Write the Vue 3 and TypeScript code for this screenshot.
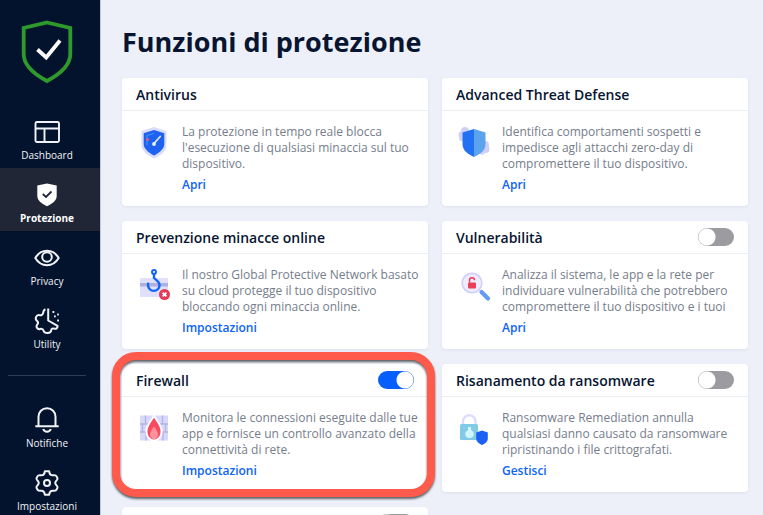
<script setup lang="ts">
import { reactive } from 'vue'

type IconName = 'antivirus' | 'atd' | 'online' | 'vulnerability' | 'firewall' | 'ransomware' | 'none'

interface Feature {
  id: string
  title: string
  text: string
  action: string
  icon: IconName
  enabled?: boolean
  highlighted?: boolean
}

interface NavItem {
  id: string
  label: string
}

const mainNav: NavItem[] = [
  { id: 'dashboard', label: 'Dashboard' },
  { id: 'protection', label: 'Protezione' },
  { id: 'privacy', label: 'Privacy' },
  { id: 'utility', label: 'Utility' },
]

const secondaryNav: NavItem[] = [
  { id: 'notifications', label: 'Notifiche' },
  { id: 'settings', label: 'Impostazioni' },
]

const active = 'protection'

const features = reactive<Feature[]>([
  {
    id: 'antivirus',
    title: 'Antivirus',
    text: "La protezione in tempo reale blocca\nl'esecuzione di qualsiasi minaccia sul tuo\ndispositivo.",
    action: 'Apri',
    icon: 'antivirus',
  },
  {
    id: 'atd',
    title: 'Advanced Threat Defense',
    text: 'Identifica comportamenti sospetti e\nimpedisce agli attacchi zero-day di\ncompromettere il tuo dispositivo.',
    action: 'Apri',
    icon: 'atd',
  },
  {
    id: 'online',
    title: 'Prevenzione minacce online',
    text: 'Il nostro Global Protective Network basato\nsu cloud protegge il tuo dispositivo\nbloccando ogni minaccia online.',
    action: 'Impostazioni',
    icon: 'online',
  },
  {
    id: 'vulnerability',
    title: 'Vulnerabilità',
    text: 'Analizza il sistema, le app e la rete per\nindividuare vulnerabilità che potrebbero\ncompromettere il tuo dispositivo e i tuoi',
    action: 'Apri',
    icon: 'vulnerability',
    enabled: false,
  },
  {
    id: 'firewall',
    title: 'Firewall',
    text: 'Monitora le connessioni eseguite dalle tue\napp e fornisce un controllo avanzato della\nconnettività di rete.',
    action: 'Impostazioni',
    icon: 'firewall',
    enabled: true,
    highlighted: true,
  },
  {
    id: 'ransomware',
    title: 'Risanamento da ransomware',
    text: 'Ransomware Remediation annulla\nqualsiasi danno causato da ransomware\nripristinando i file crittografati.',
    action: 'Gestisci',
    icon: 'ransomware',
    enabled: false,
  },
  { id: 'next', title: '', text: '', action: '', icon: 'none', enabled: false },
])
</script>

<template>
  <div class="shell">
    <aside class="sidebar">
      <svg class="logo" viewBox="0 0 52 64" aria-hidden="true">
        <path d="M26 2.500 49.300 8v26c0 11-11 20.500-23.300 27C13.700 54.500 2.700 45 2.700 34V8Z" fill="none" stroke="#2f9a2c" stroke-width="3.800" />
        <path d="m16.500 29.500 8.700 8L39 20.500" fill="none" stroke="#fff" stroke-width="3.800" />
      </svg>

      <nav class="nav">
        <template v-for="(group, index) in [mainNav, secondaryNav]" :key="index">
          <hr v-if="index === 1" class="divider" />
          <a v-for="item in group" :key="item.id" href="#" class="nav-item" :class="{ active: item.id === active }">
            <svg class="nav-icon" viewBox="0 0 26 26" aria-hidden="true">
              <g v-if="item.id === 'dashboard'" fill="none" stroke="currentColor" stroke-width="1.900">
                <rect x="1.500" y="3" width="23.500" height="20" rx="1.500" />
                <path d="M1.500 9.500H25M10.500 9.500V23" />
              </g>
              <g v-else-if="item.id === 'protection'">
                <path d="m13 1.500 9.700 2v10.500c0 4.500-4.500 7.800-9.700 10.200C7.800 21.800 3.300 18.500 3.300 14V3.500Z" fill="#fff" />
                <path d="m8.800 12 3.200 3 5.500-5.500" fill="none" stroke="#212636" stroke-width="1.800" />
              </g>
              <g v-else-if="item.id === 'privacy'" fill="none" stroke="currentColor" stroke-width="2">
                <path d="M1.300 13C4 8.500 8 5.800 13 5.800S22 8.500 24.700 13C22 17.500 18 20.200 13 20.200S4 17.500 1.300 13Z" />
                <circle cx="13" cy="12" r="4.800" />
              </g>
              <g v-else-if="item.id === 'utility'" fill="none" stroke="currentColor" stroke-width="2" stroke-linejoin="round">
                <path d="M14.200.5v12l9.300 5.300c.3 2-1.300 3.500-3.200 2.800-1.600-.6-3 .2-3.200 2-.3 3-6.500 3.200-7.400.4-.6-1.800-2-2.500-3.700-2-2.500.8-4.500-2.300-2.800-4.300 1.200-1.400 1.200-2.600-.3-3.900-2.500-2-.3-6.400 2.400-5.700 1.900.5 3.600-.4 3.900-2.500.2-2 .5-3 2.300-3.200" />
                <path d="M18.500 4h1.800M20 8.300h1.800M23.200 6.500h1.600M23.200 12.500h1.800" stroke-width="1.800" />
              </g>
              <g v-else-if="item.id === 'notifications'" fill="none" stroke="currentColor" stroke-width="2">
                <path d="M4.500 19V9.800C4.500 4.800 8 1.300 13 1.300s8.500 3.500 8.500 8.500V19M1.300 19.200h23.400M9.200 22c.6 1.800 2 2.800 3.800 2.800s3.200-1 3.800-2.800" />
              </g>
              <g v-else fill="none" stroke="currentColor" stroke-width="2" stroke-linejoin="round">
                <path d="M10.800 1.300h4.400c.3 3 1.500 4.200 3.900 4 2.600-.4 3 .2 4.200 2.400.7 1.300.4 2-.7 2.900-1.800 1.600-1.800 3.200 0 4.800 1.100.9 1.400 1.600.7 2.900-1.200 2.200-1.600 2.800-4.200 2.400-2.400-.2-3.600 1-3.900 4h-4.400c-.3-3-1.500-4.200-3.900-4-2.600.4-3-.2-4.200-2.400-.7-1.300-.4-2 .7-2.900 1.800-1.600 1.800-3.200 0-4.800C2.300 9.700 2 9 2.700 7.700 3.900 5.500 4.300 4.900 6.900 5.300c2.400.2 3.600-1 3.900-4Z" />
                <circle cx="13" cy="13" r="3" />
              </g>
            </svg>
            <span>{{ item.label }}</span>
          </a>
        </template>
      </nav>
    </aside>

    <main class="content">
      <h1>Funzioni di protezione</h1>

      <div class="grid">
        <section v-for="feature in features" :key="feature.id" class="card" :class="{ highlighted: feature.highlighted }">
          <header class="card-head">
            <h2 :id="`title-${feature.id}`">{{ feature.title }}</h2>
            <input
              v-if="feature.enabled !== undefined"
              v-model="feature.enabled"
              type="checkbox"
              role="switch"
              class="switch"
              :aria-labelledby="`title-${feature.id}`"
            />
          </header>

          <div v-if="feature.text" class="card-body">
            <svg class="feature-icon" viewBox="0 0 36 36" aria-hidden="true">
              <g v-if="feature.icon === 'antivirus'">
                <path d="m18 3 12.500 4v14c0 6-6 10.500-12.500 13.500C11.500 31.500 5.500 27 5.500 21V7Z" fill="#d9dcfb" />
                <path d="m18 6 10.300 3.300V20c0 5-5 8.700-10.300 11.500C12.700 28.700 7.700 25 7.700 20V9.300Z" fill="#1e62f2" />
                <path d="M11 21V11.500L18 9.500" fill="none" stroke="#3f91f7" stroke-width="1.300" />
                <path d="m18 19.500 6.200-7" stroke="#dfe6ff" stroke-width="1.800" stroke-linecap="round" />
                <circle cx="18" cy="20" r="1.900" fill="#eef0ff" />
                <circle cx="11.700" cy="15.500" r="1.500" fill="#ef5674" />
              </g>
              <g v-else-if="feature.icon === 'atd'">
                <g fill="#cfcff7">
                  <circle cx="9" cy="7" r="4" /><circle cx="6.500" cy="11" r="4" /><circle cx="6" cy="14.500" r="2.800" />
                  <circle cx="29" cy="21" r="4" /><circle cx="29.500" cy="25" r="4" /><circle cx="26" cy="28" r="2.800" />
                </g>
                <path d="M18 5v28C11.500 30 6.500 26.500 6.500 20V8.500Z" fill="#2270f3" />
                <path d="M18 5v28c6.500-3 11.500-6.500 11.500-13V8.500Z" fill="#5ba4ed" />
              </g>
              <g v-else-if="feature.icon === 'online'">
                <rect x="4" y="11" width="28" height="19" rx="1" fill="#e0e0fc" />
                <path d="M4 16h28v3.500H4Z" fill="#afafe0" />
                <circle cx="18" cy="5" r="2" fill="none" stroke="#0f65f7" stroke-width="1.900" />
                <path d="M18 7v4c1.800 1.800 5.500 3.200 5.500 7.200a5.700 5.700 0 0 1-11.400 0v-1.500" fill="none" stroke="#0f65f7" stroke-width="2.400" stroke-linecap="round" />
                <circle cx="28.500" cy="27.500" r="5.500" fill="#e33a58" />
                <path d="m26.600 25.600 3.800 3.800m0-3.800-3.800 3.800" stroke="#fff" stroke-width="1.800" />
              </g>
              <g v-else-if="feature.icon === 'vulnerability'">
                <path d="m25.500 25 6.500 6.500" stroke="#659bf8" stroke-width="4.200" stroke-linecap="round" />
                <circle cx="16" cy="16" r="9.800" fill="#ededff" stroke="#cfcffa" stroke-width="1.600" />
                <rect x="12" y="15.500" width="8" height="6" rx="1" fill="#ec3d5a" />
                <path d="M13.500 15.500v-2.200a2.500 2.500 0 0 1 5 0" fill="none" stroke="#ec3d5a" stroke-width="1.500" />
              </g>
              <g v-else-if="feature.icon === 'firewall'">
                <rect x="4" y="5.500" width="28" height="25" fill="#d8d8fa" />
                <path d="M4 14h28M4 22h28M9.500 5.500V14M26.500 5.500V14M6.500 14v8M29.500 14v8M10 22v8.500M27 22v8.500" stroke="#b3b3e6" stroke-width="1.300" />
                <path d="M18 6c3 5 7.600 9.500 7.600 15.500 0 5-3.400 9-7.600 9s-7.600-4-7.600-9C10.400 15.500 15 11 18 6Z" fill="#f84b5f" stroke="#fff" stroke-width="2" />
                <path d="M18 16.500c2 3 4 5.200 4 8s-1.800 4.700-4 4.700-4-1.900-4-4.700 2-5 4-8Z" fill="#ff929c" />
              </g>
              <g v-else>
                <path d="M7 16v-4.500a6.200 6.200 0 0 1 12.500 0V16" fill="none" stroke="#dcdcff" stroke-width="2.400" />
                <rect x="4" y="14" width="18" height="16" rx="1.500" fill="#82cbe8" />
                <path d="M12 17h3v3c2.200 1.200 2.800 2.500 2.800 4 0 2.500-1.800 4-4.300 4s-4.300-1.500-4.300-4c0-1.500.8-2.800 2.800-4Z" fill="#d0f7fb" />
                <path d="m26 20.500 5.800 2v6c0 3.200-2.800 5-5.800 6.500-3-1.500-5.800-3.300-5.800-6.500v-6Z" fill="#1d60f3" />
              </g>
            </svg>

            <div class="info">
              <p>{{ feature.text }}</p>
              <a href="#">{{ feature.action }}</a>
            </div>
          </div>
        </section>
      </div>
    </main>
  </div>
</template>

<style>
body {
  margin: 0;
  background: #eef0f9;
}
</style>

<style scoped>
.shell {
  display: flex;
  height: 100vh;
  overflow: hidden;
  background: #eef0f9;
  color: #071530;
  font-family: "Open Sans", "Noto Sans", sans-serif;
}

.sidebar {
  display: flex;
  flex: 0 0 100px;
  flex-direction: column;
  overflow: hidden;
  background: #03132d;
  border-right: 1px solid #c5c9d6;
}

.logo {
  flex: none;
  width: 52px;
  height: 64px;
  margin: 20px 0 21px 21px;
}

.nav {
  display: flex;
  flex-direction: column;
  width: 100%;
}

.nav-item {
  display: flex;
  flex: none;
  flex-direction: column;
  align-items: center;
  gap: 2px;
  box-sizing: border-box;
  height: 63px;
  padding: 14px 6px 0 0;
  color: #f1f3f7;
  font-size: 10px;
  line-height: 16px;
  text-decoration: none;
}

.nav-item.active {
  background: #212636;
  color: #fff;
  font-weight: 700;
}

.nav-icon {
  display: block;
  width: 26px;
  height: 26px;
}

.divider {
  width: 78px;
  height: 1px;
  margin: 18px 0 17px 8px;
  border: 0;
  background: #2f3d54;
}

.content {
  flex: 1;
  min-width: 0;
  padding: 20px 15px 0 21px;
  overflow: hidden;
}

h1 {
  margin: 0 0 15px;
  font-size: 27px;
  line-height: 43px;
  font-weight: 700;
}

.grid {
  display: grid;
  grid-template-columns: repeat(2, minmax(0, 1fr));
  grid-auto-rows: 128px;
  gap: 15px 14px;
}

.card {
  position: relative;
  background: #fff;
  border-radius: 4px;
  box-shadow: 0 1px 3px rgba(20, 30, 80, 0.08);
}

.card.highlighted::after {
  position: absolute;
  inset: -12px -7px -5px -10px;
  border: 8px solid #ff5a4c;
  border-radius: 24px;
  filter: drop-shadow(0 2px 1px rgba(0, 0, 0, 0.6));
  content: "";
  pointer-events: none;
}

.card-head {
  display: flex;
  align-items: center;
  justify-content: space-between;
  box-sizing: border-box;
  height: 33px;
  padding: 0 14px;
  border-bottom: 1px solid #eeeef0;
}

h2 {
  margin: 0;
  font-size: 14px;
  line-height: 20px;
  padding-top: 2px;
  font-weight: 600;
}

.switch {
  flex: none;
  box-sizing: border-box;
  width: 36px;
  height: 18px;
  margin: 0;
  appearance: none;
  background: radial-gradient(circle at 9px 9px, #fff 8px, transparent 9px) #9c9ca0;
  border-radius: 9px;
  cursor: pointer;
}

.switch:checked {
  background: radial-gradient(circle at 27px 9px, #fff 8px, transparent 9px) #065ffc;
}

.card-body {
  display: flex;
  gap: 10px;
  padding: 13px 8px 0 14px;
}

.feature-icon {
  flex: none;
  width: 36px;
  height: 36px;
}

.info {
  min-width: 0;
}

p {
  margin: 0;
  color: #767d8b;
  font-size: 12px;
  line-height: 16px;
  white-space: pre;
}

.info a {
  display: inline-block;
  margin-top: 5px;
  color: #0d63fb;
  font-size: 12px;
  line-height: 16px;
  font-weight: 600;
  text-decoration: none;
}
</style>
